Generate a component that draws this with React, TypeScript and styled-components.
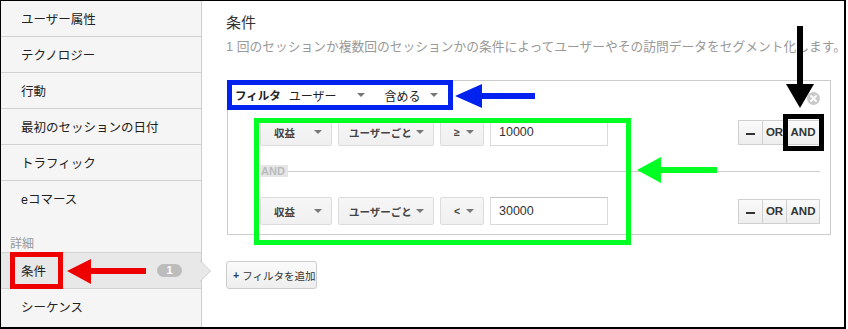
import React from 'react';
import styled, { createGlobalStyle } from 'styled-components';

const GlobalStyle = createGlobalStyle`
  html, body {
    margin: 0;
    padding: 0;
    background: #fff;
  }
  body {
    font-family: "Liberation Sans", "Noto Sans CJK JP", sans-serif;
    color: #222;
  }
`;

const navItems = ['ユーザー属性', 'テクノロジー', '行動', '最初のセッションの日付', 'トラフィック', 'eコマース'];

const conditions = [
  { op: '≥', value: '10000' },
  { op: '<', value: '30000' },
];

export default function App() {
  return (
    <>
      <GlobalStyle />
      <Frame>
        <Sidebar>
          {navItems.map((label, i) => (
            <NavItem key={label} $divider={i < navItems.length - 1}>
              {label}
            </NavItem>
          ))}
          <SectionLabel>詳細</SectionLabel>
          <NavItem $active>
            条件
            <Highlight $color="#ee0000" style={{ left: 9, top: -1, width: 53, height: 37 }} />
            <Badge>1</Badge>
            <Pointer />
          </NavItem>
          <NavItem>シーケンス</NavItem>
        </Sidebar>

        <Main>
          <Title>条件</Title>
          <Desc>1 回のセッションか複数回のセッションかの条件によってユーザーやその訪問データをセグメント化します。</Desc>

          <Panel>
            <Header>
              <HeaderGroup>
                <FilterLabel>フィルタ</FilterLabel>
                <HeaderSelect $gap={20}>ユーザー<Caret /></HeaderSelect>
                <HeaderSelect $gap={9}>含める<Caret /></HeaderSelect>
              </HeaderGroup>
              <CloseIcon width="13" height="13" viewBox="0 0 13 13">
                <circle cx="6.5" cy="6.5" r="6.5" fill="#c9c9c9" />
                <path d="M4 4 L9 9 M9 4 L4 9" stroke="#fff" strokeWidth="1.8" strokeLinecap="round" />
              </CloseIcon>
            </Header>

            <ConditionList>
              {conditions.map((c, i) => (
                <React.Fragment key={c.value}>
                  {i > 0 && (
                    <AndDivider>
                      <AndLabel>AND</AndLabel>
                      <AndLine />
                    </AndDivider>
                  )}
                  <CondRow $gap={i > 0 ? 20 : 8}>
                    <Select $w={72}>収益<Caret /></Select>
                    <Select $w={96} $pl={10}>ユーザーごと<Caret /></Select>
                    <Select $w={44}>{c.op}<Caret /></Select>
                    <ValueInput readOnly value={c.value} />
                    <SegGroup>
                      <SegButton $w={25}><Minus /></SegButton>
                      <SegButton $w={25}>OR</SegButton>
                      <SegButton $w={34}>
                        AND
                        {i === 0 && (
                          <Highlight $color="#000" style={{ left: -4, top: -7, width: 41, height: 37 }} />
                        )}
                      </SegButton>
                    </SegGroup>
                  </CondRow>
                </React.Fragment>
              ))}
              <Highlight $color="#00ff22" style={{ left: 26, top: 0, width: 377, height: 127 }} />
            </ConditionList>
          </Panel>

          <AddButton>
            <Plus>+</Plus>フィルタを追加
          </AddButton>
        </Main>

        <Arrows width="848" height="329" viewBox="0 0 848 329">
          {/* black, pointing down */}
          <rect x="797" y="26" width="6" height="60" fill="#000" />
          <polygon points="786,84 814,84 800,108" fill="#000" />
          {/* blue, pointing left */}
          <rect x="480" y="93" width="55" height="6" fill="#0022ee" />
          <polygon points="455,96 482,84 482,108" fill="#0022ee" />
          {/* green, pointing left */}
          <rect x="659" y="167" width="58" height="6" fill="#00ff22" />
          <polygon points="637,170 661,157 661,183" fill="#00ff22" />
          {/* red, pointing left */}
          <rect x="89" y="268" width="57" height="6" fill="#ee0000" />
          <polygon points="67,271 91,259 91,284" fill="#ee0000" />
        </Arrows>
      </Frame>
    </>
  );
}

const Frame = styled.div`
  position: relative;
  display: flex;
  width: 846px;
  height: 329px;
  box-sizing: border-box;
  border-style: solid;
  border-color: #000;
  border-width: 1px 2px 2px 1px;
  background: #fff;
`;

const Sidebar = styled.div`
  width: 201px;
  flex-shrink: 0;
  box-sizing: border-box;
  border-right: 1px solid #cdcdcd;
  background: #f5f5f5;
`;

const NavItem = styled.div<{ $divider?: boolean; $active?: boolean }>`
  position: relative;
  display: flex;
  align-items: center;
  height: ${p => (p.$active ? 37 : 36)}px;
  box-sizing: border-box;
  padding-left: 20px;
  font-size: 12.5px;
  color: #222;
  border-bottom: 1px solid ${p => (p.$divider || p.$active ? '#d2d2d2' : 'transparent')};
  border-top: ${p => (p.$active ? '1px solid #d2d2d2' : 'none')};
  background: ${p => (p.$active ? '#e8e8e8' : 'transparent')};
`;

const SectionLabel = styled.div`
  display: flex;
  align-items: flex-end;
  height: 35px;
  box-sizing: border-box;
  padding: 0 0 1px 9px;
  font-size: 12px;
  line-height: 14px;
  color: #999;
`;

const Badge = styled.span`
  margin-left: auto;
  margin-right: 19px;
  width: 25px;
  height: 13px;
  border-radius: 7px;
  background: #bcbcbc;
  color: #fff;
  font-size: 11px;
  font-weight: bold;
  line-height: 13px;
  text-align: center;
`;

const Pointer = styled.span`
  position: absolute;
  left: 199px;
  top: 50%;
  margin-top: -11px;
  width: 0;
  height: 0;
  border-left: 11px solid #cdcdcd;
  border-top: 11px solid transparent;
  border-bottom: 11px solid transparent;
  &::after {
    content: '';
    position: absolute;
    left: -11px;
    top: -10px;
    border-left: 10px solid #e8e8e8;
    border-top: 10px solid transparent;
    border-bottom: 10px solid transparent;
  }
`;

const Highlight = styled.span<{ $color: string }>`
  position: absolute;
  box-sizing: border-box;
  border: 5px solid ${p => p.$color};
  pointer-events: none;
  z-index: 3;
`;

const Main = styled.div`
  flex: 1;
  min-width: 0;
  padding: 11px 0 0 24px;
`;

const Title = styled.h2`
  margin: 0;
  font-size: 15px;
  font-weight: normal;
  line-height: 22px;
  color: #333;
`;

const Desc = styled.p`
  margin: 4px 0 0;
  font-size: 12.75px;
  line-height: 18px;
  color: #999;
  white-space: nowrap;
`;

const Panel = styled.div`
  position: relative;
  width: 604px;
  margin: 24px 0 0 1px;
  box-sizing: border-box;
  border: 1px solid #cccccc;
  background: #fff;
`;

const Header = styled.div`
  display: flex;
  align-items: flex-start;
  height: 29px;
`;

const HeaderGroup = styled.div`
  display: flex;
  align-items: center;
  height: 30px;
  margin: -1px 0 0 -1px;
  box-sizing: border-box;
  padding: 0 10px 0 3px;
  border: 5px solid #0022ee;
  font-size: 12px;
  color: #222;
`;

const FilterLabel = styled.span`
  font-weight: bold;
  font-size: 11.5px;
  margin-right: 8px;
`;

const HeaderSelect = styled.span<{ $gap: number }>`
  display: inline-flex;
  align-items: center;
  gap: ${p => p.$gap}px;
  margin-right: 20px;
  &:last-child {
    margin-right: 0;
  }
`;

const Caret = styled.span`
  display: inline-block;
  width: 0;
  height: 0;
  border-left: 4px solid transparent;
  border-right: 4px solid transparent;
  border-top: 4px solid #777;
`;

const CloseIcon = styled.svg`
  margin: 11px 10px 0 auto;
`;

const ConditionList = styled.div`
  position: relative;
  padding: 0 10px 9px 32px;
`;

const CondRow = styled.div<{ $gap: number }>`
  display: flex;
  align-items: center;
  gap: 5px;
  height: 28px;
  margin-top: ${p => p.$gap}px;
`;

const Select = styled.div<{ $w: number; $pl?: number }>`
  display: flex;
  align-items: center;
  justify-content: space-between;
  width: ${p => p.$w}px;
  height: 28px;
  box-sizing: border-box;
  padding: 0 9px 0 ${p => p.$pl ?? 13}px;
  border: 1px solid #dcdcdc;
  border-radius: 2px;
  background: linear-gradient(#f6f6f6, #f0f0f0);
  font-size: 10.5px;
  font-weight: bold;
  color: #444;
  & + & {
    margin-left: 1px;
  }
`;

const ValueInput = styled.input`
  width: 118px;
  height: 28px;
  margin-left: 1px;
  box-sizing: border-box;
  padding: 0 0 0 8px;
  border: 1px solid #d9d9d9;
  border-top-color: #c4c4c4;
  outline: none;
  font-family: inherit;
  font-size: 12.5px;
  color: #333;
`;

const SegGroup = styled.div`
  display: flex;
  margin-left: auto;
  height: 25px;
`;

const SegButton = styled.div<{ $w: number }>`
  position: relative;
  display: flex;
  align-items: center;
  justify-content: center;
  width: ${p => p.$w}px;
  box-sizing: border-box;
  border: 1px solid #d0d0d0;
  background: linear-gradient(#fafafa, #eeeeee);
  font-size: 11.5px;
  font-weight: bold;
  color: #333;
  & + & {
    margin-left: -1px;
  }
`;

const Minus = styled.span`
  width: 9px;
  height: 2px;
  margin-top: 3px;
  background: #333;
`;

const AndDivider = styled.div`
  display: flex;
  align-items: center;
  margin-top: 19px;
  height: 12px;
`;

const AndLabel = styled.span`
  padding: 0 3px 0 1px;
  background: #e6e6e6;
  color: #bbb;
  font-size: 11px;
  font-weight: bold;
  line-height: 12px;
`;

const AndLine = styled.span`
  flex: 1;
  height: 1px;
  background: #cccccc;
`;

const AddButton = styled.div`
  display: inline-flex;
  align-items: center;
  width: 91px;
  height: 28px;
  margin-top: 26px;
  box-sizing: border-box;
  padding: 0 0 0 6px;
  border: 1px solid #cccccc;
  border-radius: 3px;
  background: linear-gradient(#fbfbfb, #eeeeee);
  font-size: 10.5px;
  color: #333;
  white-space: nowrap;
`;

const Plus = styled.span`
  margin-right: 3px;
  color: #2a3a6a;
  font-weight: bold;
`;

const Arrows = styled.svg`
  position: absolute;
  left: -1px;
  top: -1px;
  pointer-events: none;
  z-index: 5;
`;
